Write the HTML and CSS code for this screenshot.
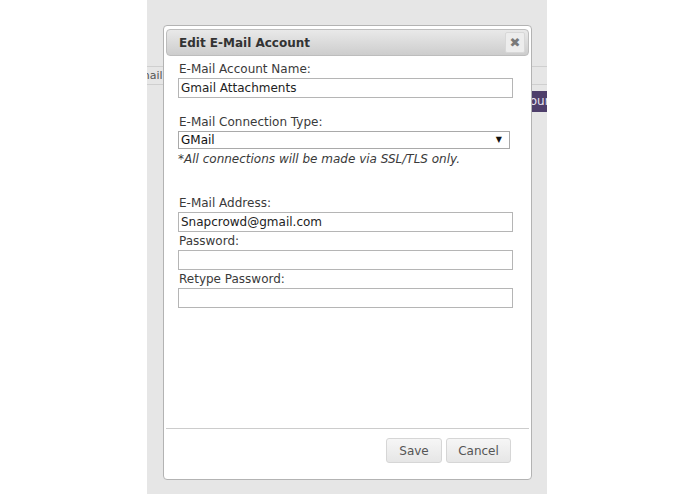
FILE: index.html
```html
<!DOCTYPE html>
<html>
<head>
<meta charset="utf-8">
<link rel="stylesheet" href="styles.css">
</head>
<body>
<div class="page">
  <div class="tabs"><span class="tab">Email</span></div>
  <div class="toolbar"><span class="add-btn">Add Account</span></div>

  <div class="dialog">
    <div class="dialog-header">
      <span class="dialog-title">Edit E-Mail Account</span>
      <span class="close-btn">&#x2716;</span>
    </div>
    <div class="dialog-body">
      <div class="field">
        <label class="label">E-Mail Account Name:</label>
        <input class="text-input" type="text" value="Gmail Attachments">
      </div>
      <div class="field field-conn">
        <label class="label">E-Mail Connection Type:</label>
        <div class="select-wrap">
          <select class="select"><option>GMail</option></select>
          <span class="select-arrow">&#9660;</span>
        </div>
        <div class="note">*All connections will be made via SSL/TLS only.</div>
      </div>
      <div class="field field-addr">
        <label class="label">E-Mail Address:</label>
        <input class="text-input" type="text" value="Snapcrowd@gmail.com">
      </div>
      <div class="field">
        <label class="label">Password:</label>
        <input class="text-input" type="password" value="">
      </div>
      <div class="field">
        <label class="label">Retype Password:</label>
        <input class="text-input" type="password" value="">
      </div>
    </div>
    <div class="dialog-footer">
      <button class="btn btn-save">Save</button>
      <button class="btn btn-cancel">Cancel</button>
    </div>
  </div>
</div>
</body>
</html>
```

FILE: styles.css
```css
html, body {
  margin: 0;
  padding: 0;
  background: #ffffff;
  font-family: "DejaVu Sans", Verdana, sans-serif;
}

.page {
  position: relative;
  margin-left: 147px;
  width: 400px;
  height: 494px;
  background: #e6e6e6;
  overflow: hidden;
}

.tabs {
  margin-top: 66px;
  height: 17px;
  border-top: 1px solid #cfcfcf;
  border-bottom: 1px solid #cfcfcf;
  display: flex;
  align-items: center;
}

.tab {
  margin-left: -15px;
  font-size: 11px;
  color: #555;
}

.toolbar {
  display: flex;
  justify-content: flex-end;
  margin-top: 6px;
}

.add-btn {
  margin-right: -16px;
  height: 21px;
  line-height: 21px;
  padding: 0 6px;
  background: #4e3f6b;
  color: #e8e4f0;
  font-size: 12px;
}

.dialog {
  position: absolute;
  left: 16px;
  top: 25px;
  width: 363px;
  height: 448px;
  padding: 3px 2px 2px 2px;
  background: #fff;
  border: 1px solid #b3b3b3;
  border-radius: 4px;
  display: flex;
  flex-direction: column;
}

.dialog-header {
  height: 25px;
  border: 1px solid #bdbdbd;
  border-radius: 4px;
  background: linear-gradient(#e9e9e9, #cdcdcd);
  display: flex;
  align-items: center;
  justify-content: space-between;
  padding: 0 3px 0 12px;
}

.dialog-title {
  font-weight: bold;
  font-size: 12px;
  color: #333;
}

.close-btn {
  width: 18px;
  height: 19px;
  display: flex;
  align-items: center;
  justify-content: center;
  background: #ededed;
  border: 1px solid #d8d8d8;
  border-radius: 2px;
  color: #7a7a7a;
  font-size: 13px;
}

.dialog-body {
  flex: 1;
  padding: 5px 16px 0 12px;
}

.field {
  display: flex;
  flex-direction: column;
}

.label {
  display: block;
  font-size: 12px;
  line-height: 16px;
  color: #3a3a3a;
  padding-left: 1px;
  margin-bottom: 1px;
}

.text-input {
  box-sizing: border-box;
  width: 335px;
  height: 20px;
  margin: 0 0 1px 0;
  padding: 0 2px;
  border: 1px solid #b5b5b5;
  font-family: "DejaVu Sans", Verdana, sans-serif;
  font-size: 12px;
  color: #222;
  outline: none;
}

.field-conn {
  margin-top: 15px;
}

.field-conn .label {
  margin-bottom: 1px;
}

.select-wrap {
  position: relative;
  width: 332px;
  height: 18px;
}

.select {
  appearance: none;
  -webkit-appearance: none;
  display: block;
  box-sizing: border-box;
  width: 332px;
  height: 18px;
  margin: 0;
  padding: 0 2px;
  border: 1px solid #a9a9a9;
  border-radius: 0;
  background: #fff;
  font-family: "DejaVu Sans", Verdana, sans-serif;
  font-size: 12px;
  color: #111;
}

.select-arrow {
  position: absolute;
  right: 8px;
  top: 4px;
  font-size: 8px;
  color: #111;
  pointer-events: none;
}

.note {
  margin-top: 2px;
  font-size: 12px;
  line-height: 16px;
  font-style: italic;
  color: #3a3a3a;
}

.field-addr {
  margin-top: 28px;
}

.dialog-footer {
  box-sizing: border-box;
  border-top: 1px solid #cccccc;
  height: 49px;
  display: flex;
  justify-content: flex-end;
  align-items: flex-start;
  gap: 4px;
  padding: 9px 18px 0 0;
}

.btn {
  height: 25px;
  padding: 0;
  border: 1px solid #d6d6d6;
  border-radius: 3px;
  background: linear-gradient(#f6f6f6, #e6e6e6);
  font-family: "DejaVu Sans", Verdana, sans-serif;
  font-size: 12px;
  color: #555;
}

.btn-save {
  width: 56px;
}

.btn-cancel {
  width: 65px;
}
```
